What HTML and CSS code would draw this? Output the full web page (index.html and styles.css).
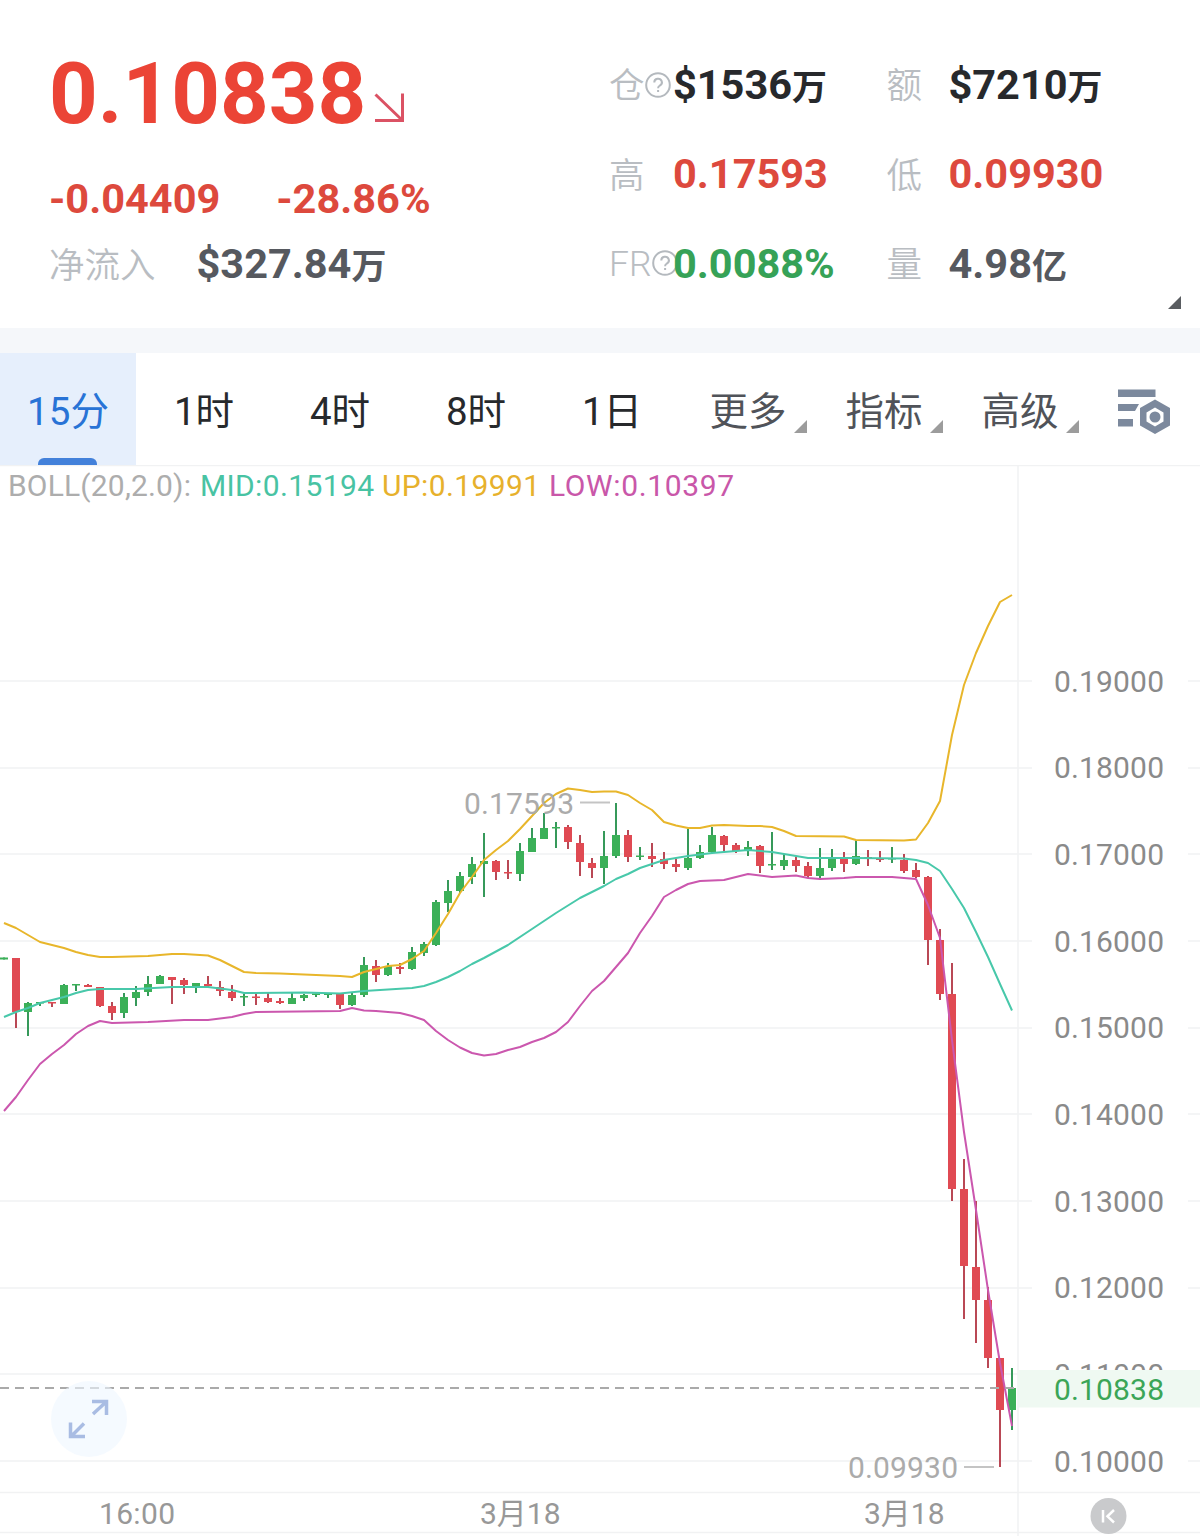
FILE: index.html
```html
<!DOCTYPE html>
<html lang="zh-CN">
<head>
  <meta charset="UTF-8">
  <meta name="viewport" content="width=device-width, initial-scale=1.0">
  <title>行情</title>
  <link rel="stylesheet" href="styles.css">
</head>
<body>
  <header class="ticker">
    <div class="quote">
      <div class="price">
        <span>0.10838</span>
        <svg class="trend" width="32" height="32" viewBox="0 0 32 32"><path d="M2.5 3.5L29 29M29.5 2.5V29.5H2"/></svg>
      </div>
      <div class="change">
        <span>-0.04409</span>
        <span>-28.86%</span>
      </div>
      <div class="inflow">
        <span class="label">净流入</span>
        <span class="value">$327.84<span class="unit">万</span></span>
      </div>
    </div>
    <div class="stats">
      <span class="label">仓<svg class="help" viewBox="0 0 26 26"><circle cx="13" cy="13" r="11.8"/><path d="M9.3 10.5a3.8 3.6 0 1 1 5.6 3q-1.8 1-1.8 2.7M13.1 18v2"/></svg></span>
      <span class="value dark">$1536<span class="unit">万</span></span>
      <span class="label">额</span>
      <span class="value dark">$7210<span class="unit">万</span></span>
      <span class="label">高</span>
      <span class="value down">0.17593</span>
      <span class="label">低</span>
      <span class="value down">0.09930</span>
      <span class="label latin">FR<svg class="help" viewBox="0 0 26 26"><circle cx="13" cy="13" r="11.8"/><path d="M9.3 10.5a3.8 3.6 0 1 1 5.6 3q-1.8 1-1.8 2.7M13.1 18v2"/></svg></span>
      <span class="value up">0.0088%</span>
      <span class="label">量</span>
      <span class="value">4.98<span class="unit">亿</span></span>
    </div>
    <i class="corner"></i>
  </header>

  <nav class="tabs">
    <a class="tab active">15分</a>
    <a class="tab">1时</a>
    <a class="tab">4时</a>
    <a class="tab">8时</a>
    <a class="tab">1日</a>
    <a class="tab menu">更多</a>
    <a class="tab menu">指标</a>
    <a class="tab menu">高级</a>
    <svg class="settings" width="54" height="46" viewBox="0 0 54 46">
      <path d="M1 1.5h37.5v7.5H1zM1 16h21l-4 7H1zM1 31h15v7.5H1z"/>
      <path fill-rule="evenodd" d="M38 11.500L53 20V37.500L38 46L23 37.500V20zM38 19.500L29.500 24.500V33.500L38 38.500L46.500 33.500V24.500z"/>
      <circle cx="38" cy="29" r="5.500"/>
    </svg>
  </nav>

  <main class="chart">
    <svg id="kline" width="1200" height="1071" viewBox="0 465 1200 1071">
      <g id="grid" class="grid"></g>
      <g id="candles"></g>
      <polyline id="mid" class="line mid"/>
      <polyline id="up" class="line upper"/>
      <polyline id="low" class="line lower"/>

      <g class="legend">
        <text x="8" y="496" textLength="183">BOLL(20,2.0):</text>
        <text x="200" y="496" textLength="174" class="t-mid">MID:0.15194</text>
        <text x="382" y="496" textLength="158" class="t-up">UP:0.19991</text>
        <text x="549" y="496" textLength="185" class="t-low">LOW:0.10397</text>
      </g>

      <g class="extreme">
        <text x="464" y="814" textLength="110">0.17593</text>
        <path d="M580 802.500H610"/>
        <text x="848" y="1478" textLength="110">0.09930</text>
        <path d="M964 1467H994"/>
      </g>

      <g id="axis" class="axis"></g>
      <path class="last-line" d="M0 1388H1016"/>
      <rect class="last-bg" x="1018" y="1370" width="182" height="37.500"/>
      <text class="last" x="1054" y="1399.500" textLength="110">0.10838</text>

      <g class="axis time">
        <text x="99" y="1524" textLength="76">16:00</text>
        <text x="480" y="1524">3月18</text>
        <text x="864" y="1524">3月18</text>
      </g>

      <g class="fullscreen">
        <circle cx="89" cy="1419" r="38"/>
        <path d="M93 1414L106 1402M92 1401.500H106.500V1415M84 1423.500L71.500 1436M70.500 1422.500V1436.500H85"/>
      </g>
      <g class="to-end">
        <circle cx="1108.500" cy="1516" r="18"/>
        <path d="M1103 1510V1522.500M1114 1510L1107.500 1516.300L1114 1522.500"/>
      </g>
    </svg>
  </main>

  <script>
    const STEP = 12;
    const NS = "http://www.w3.org/2000/svg";

    // [up?, body top, body bottom, wick top, wick bottom]
    const candles = [
      [1,957.5,959.5,957.5,959.5],[0,958,1012,958,1028],[1,1003,1012,1002,1036],[1,1002,1003.5,1002,1006],
      [0,1002,1003.5,1002,1007],[1,985,1004,984,1004],[1,984,985.5,984,991],[0,985,987,984,987],
      [0,987,1006,987,1007],[0,1006,1013,1002,1020],[1,997,1013,993,1018],[1,992,998,986,1006],
      [1,984,992,976,996],[1,976,984,975,984],[0,977,980,977,1004],[0,980,985,978,994],
      [1,983,986,983,993],[0,984,986,976,988],[0,987,991,981,996],[0,992,998,985,1001],
      [1,996,997.5,994,1006],[0,996.5,998,994,1005],[0,998,1002,993,1003],[0,1001,1003,998,1004],
      [1,998,1004,993,1004],[1,995,998,994,1001],[1,993.5,995,993.5,997],[1,993.5,995,993.5,998],
      [0,994,1005,994,1009],[1,995,1005,993,1006],[1,965,995,957,997],[0,966,975,960,982],
      [1,966,975,963,976],[0,967,969,963,974],[1,952,969,947,970],[1,944,953,942,956],
      [1,902,945,900,946],[1,891,903,880,912],[1,876,891,872,893],[1,864,877,857,884],
      [1,861,864,833,897],[0,861,872,860,880],[0,872,873.5,860,879],[1,851,874,843,881],
      [1,838,852,828,852],[1,828,839,813,839],[1,827,828.5,822,848],[0,827,842,825,849],
      [0,843,862,835,876],[0,863,868,858,878],[1,856,868,831,884],[1,835,856,803,858],
      [0,835,857,830,862],[1,855.5,857,847,860],[0,856,859,843,867],[0,859,864,852,869],
      [0,864,867,859,872],[1,858,868,829,870],[1,852,858,845,859],[1,835,852,827,853],
      [0,836,845,835,853],[0,845,851,843,853],[1,847,851,841,856],[0,846,866,845,873],
      [1,864,865.5,832,870],[1,860,866,854,870],[0,860,866,857,872],[0,866,876,862,878],
      [1,868,876,848,878],[1,857,868,849,871],[0,857,864,852,872],[1,856,864,840,865],
      [0,857,858.5,850,866],[0,858.5,860,851,862],[1,858,859.5,847,863],[0,860,871,854,873],
      [0,870,877,863,878],[0,877,940,876,965],[0,940,994,929,1000],[0,994,1189,963,1201],
      [0,1189,1266,1159,1319],[0,1267,1300,1201,1343],[0,1300,1358,1287,1368],[0,1358,1410,1358,1467],
      [1,1388,1410,1368,1430]
    ];

    const bands = {
      up: "4,923 16,928 28,935 40,942 52,945 64,948 76,952 88,955 100,957 112,957 148,956 172,954 184,954 208,955.5 220,960 232,966 244,972 256,973 280,973.5 304,974.5 340,976 352,977 364,972 376,969 388,966 400,965 412,959 424,951 436,933 448,914 460,893 472,877 484,860 496,850 508,841 520,829 532,816 544,803 556,794 568,788.5 580,790 592,792 604,791.5 616,791.5 628,795 640,803 652,810 664,822 676,825.5 688,828 700,828 712,825.5 724,825 748,826 760,826 772,827 784,831 796,836 844,836.5 856,840 904,840.5 916,839.5 928,823 940,801 952,735 964,685 976,653 988,626 1000,602 1012,595",
      mid: "4,1017 16,1012 28,1008 40,1003 52,1000 64,997 76,993 88,990 100,989 136,989 172,987 208,987 232,990 244,993 304,992.5 340,993.5 364,991 388,989.5 412,988 424,986 436,982 448,977 460,971 472,964 484,958 508,945 532,929 556,913 580,898 604,886 616,879 628,874 640,868 652,864 664,860 688,856 712,853 736,851 748,850 772,852 808,858 856,858 904,858.5 916,860 928,863 940,871 952,889 964,908 976,932 988,957 1000,984 1012,1010.5",
      low: "4,1111 16,1097 28,1080 40,1064 52,1054 64,1045 76,1034 88,1026 100,1021 112,1023 148,1022 184,1020 208,1020 232,1017 244,1014 256,1012 340,1011 352,1008 364,1010.5 376,1011 388,1012 400,1013 412,1016 424,1020 436,1031 448,1040 460,1047.5 472,1053 484,1055.5 496,1054 508,1050 520,1047 532,1042 544,1038 556,1032 568,1022 580,1006 592,991 604,981 616,967 628,953 640,933 652,916 664,897 676,890 688,884 700,881 724,880 748,874 772,877 796,875.5 808,878 820,879 844,878 856,877 892,877 904,878 916,879 928,905 940,938 952,1040 964,1132 976,1210 988,1290 1000,1363 1012,1426"
    };

    function add(parent, tag, attrs, text) {
      const el = document.createElementNS(NS, tag);
      for (const key in attrs) el.setAttribute(key, attrs[key]);
      if (text) el.textContent = text;
      parent.appendChild(el);
    }

    const grid = document.getElementById("grid");
    const axis = document.getElementById("axis");
    for (let i = 0; i < 10; i++) {
      const y = 681 + i * 86.67;
      const line = Math.round(y);
      add(grid, "path", { d: `M0 ${line}H1032M1188 ${line}H1200` });
      add(axis, "text", { x: 1054, y: y + 10.5, textLength: 110 }, (0.19 - i * 0.01).toFixed(5));
    }
    add(grid, "path", { d: "M0 465.5H1200M0 1492.500H1200M0 1532.500H1200M1018 465V1536" });

    const layer = document.getElementById("candles");
    candles.forEach(([up, top, bottom, high, low], i) => {
      const x = 4 + i * STEP;
      const cls = up ? "rise" : "fall";
      add(layer, "rect", { class: cls + " wick", x: x - 1, y: high, width: 2, height: low - high });
      add(layer, "rect", { class: cls, x: x - 4, y: top, width: 8, height: bottom - top });
    });

    for (const id in bands) document.getElementById(id).setAttribute("points", bands[id]);
  </script>
</body>
</html>
```
FILE: styles.css
```css
* {
  box-sizing: border-box;
}

body {
  margin: 0;
  background: #fff;
  color: #56595f;
  font-family: Roboto, "Noto Sans CJK SC", sans-serif;
}

.ticker {
  position: relative;
  display: flex;
  height: 328px;
  padding-left: 49px;
}

.quote {
  width: 560px;
  padding-top: 51px;
}

.price {
  display: flex;
  height: 86px;
  line-height: 86px;
  font-size: 85px;
  font-weight: 700;
  color: #eb4436;
}

.trend {
  margin: 40px 0 0 7px;
  fill: none;
  stroke: #db5264;
  stroke-width: 3;
}

.change {
  display: flex;
  gap: 56px;
  margin-top: 40px;
  line-height: 44px;
  font-size: 41.5px;
  font-weight: 700;
  color: #dd493d;
}

.inflow {
  display: flex;
  gap: 41px;
  margin-top: 21px;
  line-height: 44px;
}

.label {
  padding-top: 3px;
  font-size: 35.5px;
  font-weight: 350;
  color: #b9bdc2;
  white-space: nowrap;
}

.inflow .label {
  padding-top: 2px;
}

.latin {
  padding-top: 1px;
}

.value {
  font-size: 41.5px;
  font-weight: 700;
  white-space: nowrap;
}

.unit {
  font-size: 35px;
  line-height: 1;
  vertical-align: -1px;
}

.stats {
  display: grid;
  grid-template-columns: 64px 213.5px 62px 1fr;
  grid-auto-rows: 89.5px;
  align-items: center;
  flex: 1;
  padding-top: 40px;
  line-height: 44px;
}

.help {
  width: 26px;
  height: 26px;
  vertical-align: 0;
  fill: none;
  stroke: #b4b9be;
  stroke-width: 2;
}

.dark {
  color: #27292c;
}

.down {
  color: #dd493d;
}

.up {
  color: #36a257;
  z-index: 1;
}

.corner {
  position: absolute;
  right: 19px;
  bottom: 19px;
  border-left: 13px solid transparent;
  border-bottom: 13px solid #5a5d61;
}

.tabs {
  display: flex;
  height: 137px;
  border-top: 25px solid #f5f7fa;
}

.tab {
  position: relative;
  width: 136px;
  line-height: 118px;
  text-align: center;
  font-size: 38.5px;
  color: #27292c;
}

.active {
  background: #e6effc;
  color: #2873d6;
}

.active::after {
  content: "";
  position: absolute;
  left: 38px;
  bottom: 0;
  width: 59px;
  height: 7px;
  border-radius: 6px 6px 0 0;
  background: #4381da;
}

.menu {
  color: #505359;
}

.menu::after {
  content: "";
  position: absolute;
  right: 9px;
  bottom: 32px;
  border-left: 13px solid transparent;
  border-bottom: 13px solid #9c9c9c;
}

.settings {
  margin: 35px 0 0 29px;
  fill: #7c899d;
}

.chart svg {
  display: block;
}

.chart text {
  font-size: 30px;
}

.grid {
  fill: none;
  stroke: #f1f2f3;
  stroke-width: 1.5;
}

.rise {
  fill: #3bb058;
}

.fall {
  fill: #e04a53;
}

.rise.wick {
  fill: #36995a;
}

.fall.wick {
  fill: #b94855;
}

.line {
  fill: none;
  stroke-width: 2;
  stroke-linejoin: round;
}

.mid {
  stroke: #48c8aa;
}

.upper {
  stroke: #e8b62b;
}

.lower {
  stroke: #cb57ae;
}

.legend {
  fill: #adadad;
}

.t-mid {
  fill: #48c3a3;
}

.t-up {
  fill: #e7b12c;
}

.t-low {
  fill: #c957a9;
}

.extreme {
  fill: #ababab;
}

.extreme path {
  stroke: #c4c4c4;
  stroke-width: 2;
}

.axis {
  fill: #8a8a8a;
}

.time {
  fill: #989898;
}

.last-line {
  stroke: #aaa;
  stroke-width: 2;
  stroke-dasharray: 9 6;
}

.last-bg {
  fill: #eff9f2;
}

.last {
  fill: #3ba557;
}

.fullscreen circle {
  fill: #eef6ff;
  fill-opacity: 0.6;
}

.fullscreen path {
  fill: none;
  stroke: #a9bce3;
  stroke-width: 3.5;
}

.to-end circle {
  fill: #c9cacc;
}

.to-end path {
  fill: none;
  stroke: #fff;
  stroke-width: 2.5;
}
```
